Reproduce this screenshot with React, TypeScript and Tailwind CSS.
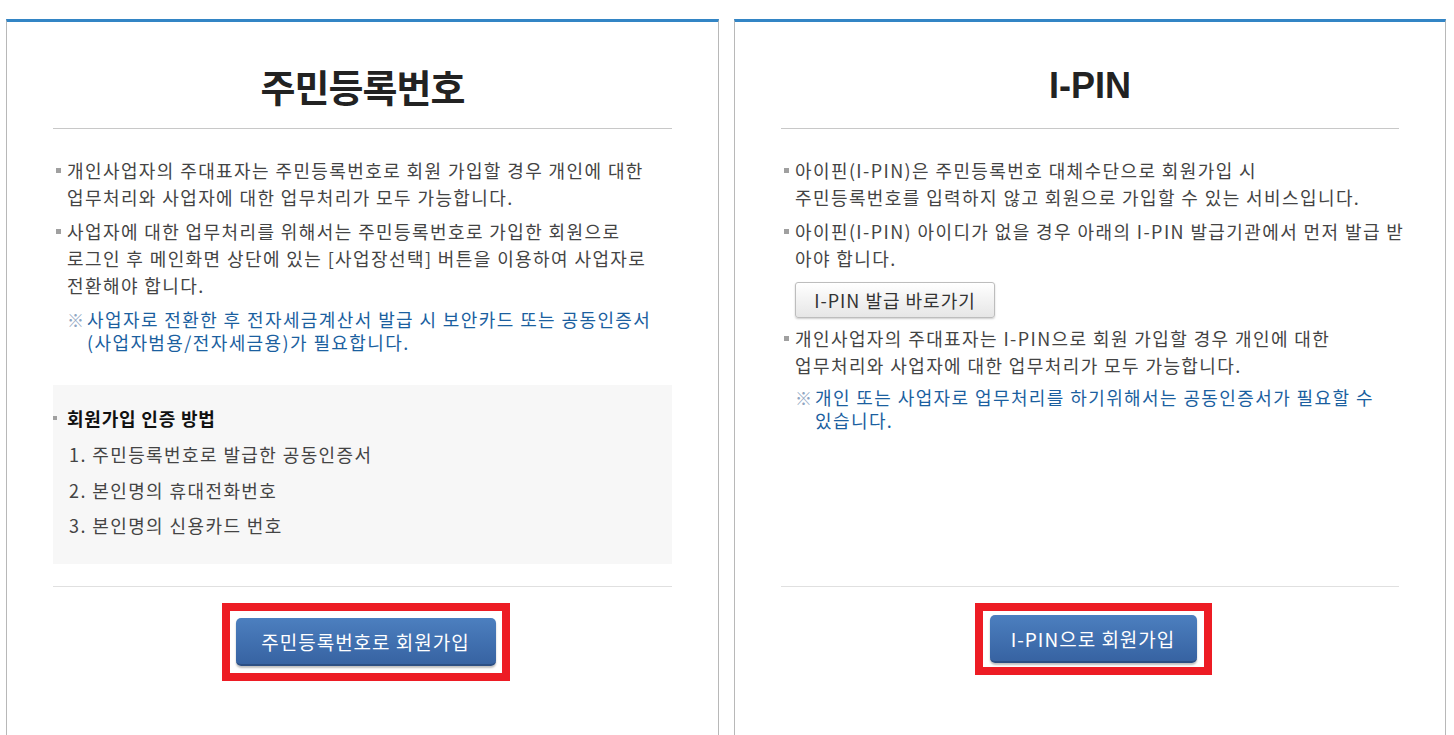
import React from "react";

const font = "font-['Noto_Sans_CJK_KR','Liberation_Sans',sans-serif]";

interface BulletProps {
    lines: string[];
    className?: string;
}

const Bullet: React.FC<BulletProps> = ({ lines, className }) => {
    return (
        <div className={`flex items-start ${className ?? ""}`}>
            <div className="w-[14px] h-[27px] flex items-center shrink-0">
                <span className="ml-[3px] w-[5px] h-[5px] bg-[#a0a0a0]" />
            </div>
            <p className="text-[18px] leading-[27px] tracking-[1.4px] text-[#444] whitespace-nowrap">
                {lines.map((l, i) => (
                    <React.Fragment key={i}>
                        {l}
                        {i < lines.length - 1 && <br />}
                    </React.Fragment>
                ))}
            </p>
        </div>
    );
};

const Note: React.FC<BulletProps> = ({ lines, className }) => {
    return (
        <div className={`flex items-start pl-[14px] ${className ?? ""}`}>
            <span className="w-[20px] shrink-0 text-[17px] leading-[23px] text-[#8fa6c2]">※</span>
            <p className="text-[18px] leading-[23px] tracking-[1.4px] text-[#1b5f9f] whitespace-nowrap">
                {lines.map((l, i) => (
                    <React.Fragment key={i}>
                        {l}
                        {i < lines.length - 1 && <br />}
                    </React.Fragment>
                ))}
            </p>
        </div>
    );
};

interface PanelProps {
    title: string;
    titleClass: string;
    children: React.ReactNode;
    button: React.ReactNode;
    width: string;
}

const Panel: React.FC<PanelProps> = ({ title, titleClass, children, button, width }) => {
    return (
        <div className={`${width} h-full flex flex-col border-t-[3px] border-t-[#3385c5] border-x border-x-[#b8b8b8] px-[46px]`}>
            {/* 제목 */}
            <div className="pt-[42px] pb-[20px] border-b border-[#c8c8c8] text-center">
                <h2 className={`leading-[44px] font-bold text-[#222] ${titleClass}`}>{title}</h2>
            </div>

            {/* 본문 */}
            <div className="h-[458px] border-b border-[#e0e0e0] pt-[28px]">{children}</div>

            {/* 하단 버튼 */}
            <div className="mt-[16px] pl-[6px] flex justify-center">{button}</div>
        </div>
    );
};

const BlueButton: React.FC<{ label: string; w: string; pad: string }> = ({ label, w, pad }) => {
    return (
        <div className={`border-[8px] border-[#ed1c24] bg-white ${pad}`}>
            <button
                className={`${w} h-[48px] rounded-[5px] bg-gradient-to-b from-[#4c7fbf] to-[#3763a2] border-b-2 border-[#2c4f83] shadow-[0_2px_2px_rgba(0,0,0,0.25)] text-white text-[19px] tracking-[1px] leading-none`}
            >
                {label}
            </button>
        </div>
    );
};

export default function App() {
    return (
        <div className={`w-full h-[735px] overflow-hidden bg-white flex gap-[15px] pl-[6px] pt-[19px] ${font}`}>
            <Panel
                title="주민등록번호"
                titleClass="text-[38px] tracking-[-1px]"
                width="w-[713px]"
                button={<BlueButton label="주민등록번호로 회원가입" w="w-[260px]" pad="px-[6px] py-[7px]" />}
            >
                <Bullet
                    lines={[
                        "개인사업자의 주대표자는 주민등록번호로 회원 가입할 경우 개인에 대한",
                        "업무처리와 사업자에 대한 업무처리가 모두 가능합니다.",
                    ]}
                />
                <Bullet
                    className="mt-[7px]"
                    lines={[
                        "사업자에 대한 업무처리를 위해서는 주민등록번호로 가입한 회원으로",
                        "로그인 후 메인화면 상단에 있는 [사업장선택] 버튼을 이용하여 사업자로",
                        "전환해야 합니다.",
                    ]}
                />
                <Note
                    className="mt-[9px]"
                    lines={["사업자로 전환한 후 전자세금계산서 발급 시 보안카드 또는 공동인증서", "(사업자범용/전자세금용)가 필요합니다."]}
                />

                <div className="mt-[31px] h-[179px] bg-[#f7f7f7] pt-[20px]">
                    <div className="flex items-center">
                        <span className="w-[14px] flex">
                            <span className="w-[4px] h-[4px] bg-[#a0a0a0]" />
                        </span>
                        <p className="text-[18px] leading-[26px] font-bold tracking-[0.8px] text-[#111]">회원가입 인증 방법</p>
                    </div>
                    <ul className="mt-[6px] pl-[16px] text-[18px] leading-[35.5px] tracking-[1.4px] text-[#444]">
                        <li>1. 주민등록번호로 발급한 공동인증서</li>
                        <li>2. 본인명의 휴대전화번호</li>
                        <li>3. 본인명의 신용카드 번호</li>
                    </ul>
                </div>
            </Panel>

            <Panel
                title="I-PIN"
                titleClass="text-[36px] font-['Liberation_Sans',sans-serif] tracking-[0px]"
                width="w-[712px]"
                button={<BlueButton label="I-PIN으로 회원가입" w="w-[207px]" pad="px-[7px] py-[4px]" />}
            >
                <Bullet
                    lines={[
                        "아이핀(I-PIN)은 주민등록번호 대체수단으로 회원가입 시",
                        "주민등록번호를 입력하지 않고 회원으로 가입할 수 있는 서비스입니다.",
                    ]}
                />
                <Bullet
                    className="mt-[7px]"
                    lines={["아이핀(I-PIN) 아이디가 없을 경우 아래의 I-PIN 발급기관에서 먼저 발급 받", "아야 합니다."]}
                />
                <div className="pl-[14px] mt-[10px]">
                    <button className="w-[200px] h-[36px] rounded-[3px] border border-[#bdbdbd] bg-gradient-to-b from-white to-[#e6e6e6] shadow-[0_1px_2px_rgba(0,0,0,0.2)] text-[18px] tracking-[1px] text-[#333] leading-none">
                        I-PIN 발급 바로가기
                    </button>
                </div>
                <Bullet
                    className="mt-[7px]"
                    lines={[
                        "개인사업자의 주대표자는 I-PIN으로 회원 가입할 경우 개인에 대한",
                        "업무처리와 사업자에 대한 업무처리가 모두 가능합니다.",
                    ]}
                />
                <Note
                    className="mt-[7px]"
                    lines={["개인 또는 사업자로 업무처리를 하기위해서는 공동인증서가 필요할 수", "있습니다."]}
                />
            </Panel>
        </div>
    );
}
